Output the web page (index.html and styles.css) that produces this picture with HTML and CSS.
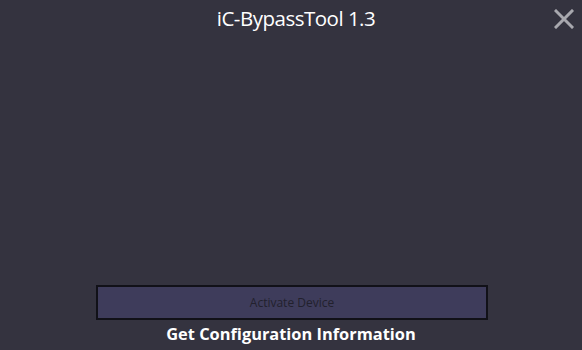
FILE: index.html
```html
<!DOCTYPE html>
<html lang="en">

<head>
  <meta charset="UTF-8" />
  <title>iC-BypassTool 1.3</title>
  <link rel="stylesheet" href="styles.css">
</head>

<body>
  <div class="window">
    <div class="titlebar">
      <span class="title">iC-BypassTool 1.3</span>
      <button class="close-button" title="Close">
        <svg width="20" height="20" viewBox="0 0 20 20">
          <path d="M2 2 L18 18 M18 2 L2 18" stroke="#a8a8ae" stroke-width="3" stroke-linecap="square" />
        </svg>
      </button>
    </div>
    <div class="body"></div>
    <div class="footer">
      <button class="activate-button">Activate Device</button>
      <div class="config-link">Get Configuration Information</div>
    </div>
  </div>
</body>

</html>
```

FILE: styles.css
```css
/* 窗口整体 */
body {
  margin: 0;
  background-color: #34333f;
  font-family: "Open Sans", "Noto Sans", Arial, sans-serif;
  color: #ffffff;
  overflow: hidden;
}

.window {
  width: 582px;
  height: 350px;
  display: flex;
  flex-direction: column;
}

/* 标题栏 */
.titlebar {
  position: relative;
  height: 36px;
  display: flex;
  justify-content: center;
  align-items: center;
}

.title {
  font-size: 20.5px;
  letter-spacing: -0.5px;
  margin-left: 10px;
  margin-top: 0;
}

.close-button {
  position: absolute;
  right: 8px;
  top: 9px;
  width: 20px;
  height: 20px;
  padding: 0;
  border: none;
  background: none;
  cursor: pointer;
}

.close-button svg {
  display: block;
}

.body {
  flex: 1;
}

/* 底部按钮区 */
.footer {
  display: flex;
  flex-direction: column;
  align-items: center;
  padding-bottom: 4px;
}

.activate-button {
  width: 392px;
  height: 35px;
  margin-left: 2px;
  background-color: #3e3c5b;
  border: 2px solid #111118;
  color: #22212d;
  font-family: "Open Sans", "Noto Sans", Arial, sans-serif;
  font-size: 12px;
}

.config-link {
  margin-top: 2px;
  font-size: 16.4px;
  font-weight: bold;
  line-height: 24px;
}
```
